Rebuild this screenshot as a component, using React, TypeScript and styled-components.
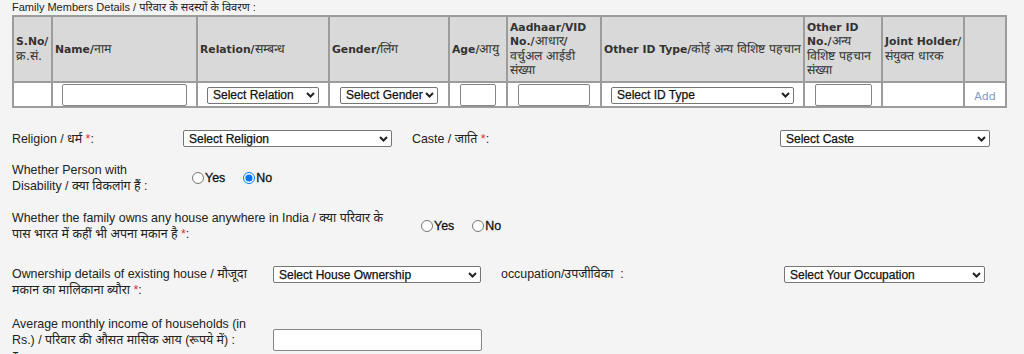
import React from 'react';
import styled, { createGlobalStyle } from 'styled-components';

const GlobalStyle = createGlobalStyle`
  html, body {
    margin: 0;
    padding: 0;
    background: #f4f4f4;
  }
  body {
    font-family: 'Liberation Sans', Arial, 'Noto Sans Devanagari', 'Lohit Devanagari', sans-serif;
    color: #333;
  }
`;

const Page = styled.div`
  width: 1024px;
  height: 354px;
  padding: 0 12px;
  box-sizing: border-box;
  overflow: hidden;
`;

const SectionTitle = styled.div`
  height: 15px;
  font-size: 11px;
  line-height: 14px;
  color: #222;
`;

const Table = styled.table`
  width: 993px;
  table-layout: fixed;
  border-collapse: separate;
  border-spacing: 0;
  border: 1px solid #9c9c9c;
`;

const Th = styled.th`
  height: 64px;
  padding: 0 2px;
  background: #d9d9d9;
  border: 1px solid #9c9c9c;
  text-align: left;
  vertical-align: middle;
  font-family: 'DejaVu Sans', Verdana, sans-serif;
  font-size: 10.8px;
  font-weight: bold;
  line-height: 13.5px;
  color: #333;
  white-space: nowrap;
  overflow: hidden;
`;

const Hi = styled.span`
  font-size: 12.4px;
  font-weight: normal;
`;

const Td = styled.td`
  height: 23px;
  padding: 0;
  background: #fff;
  border: 1px solid #9c9c9c;
  text-align: center;
  vertical-align: middle;
`;

const TextInput = styled.input<{ $w: number }>`
  width: ${(p) => p.$w}px;
  height: 22px;
  box-sizing: border-box;
  margin: 0;
  padding: 1px 3px;
  background: #fff;
  border: 1px solid #858585;
  border-radius: 2px;
  vertical-align: middle;
`;

const SelectBox = styled.div<{ $w: number }>`
  display: inline-flex;
  align-items: center;
  justify-content: space-between;
  gap: 2px;
  width: ${(p) => p.$w}px;
  height: 17px;
  box-sizing: border-box;
  padding: 0 3px 0 5px;
  background: #fff;
  border: 1px solid #767676;
  border-radius: 2px;
  font-family: 'Liberation Sans', Arial, sans-serif;
  font-size: 12px;
  color: #111;
  -webkit-text-stroke: 0.25px #111;
  text-align: left;
  white-space: nowrap;
  vertical-align: middle;
  cursor: default;
`;

const AddLink = styled.a`
  font-family: 'DejaVu Sans', Verdana, sans-serif;
  font-size: 11px;
  color: #7d9bc1;
  text-decoration: none;
`;

const FormRow = styled.div<{ $cols: string; $top: number; $align?: string }>`
  display: grid;
  grid-template-columns: ${(p) => p.$cols};
  align-items: ${(p) => p.$align ?? 'center'};
  margin-top: ${(p) => p.$top}px;
`;

const Label = styled.div`
  font-size: 12.4px;
  line-height: 16px;
  color: #222;
`;

const Req = styled.span`
  color: #e2332f;
`;

const RadioGroup = styled.div`
  display: flex;
  align-items: center;
`;

const RadioLabel = styled.label`
  display: inline-flex;
  align-items: center;
  margin-right: 18px;
  font-size: 12.4px;
  color: #111;
  -webkit-text-stroke: 0.3px #111;
`;

const Radio = styled.input.attrs({ type: 'radio' })`
  width: 12px;
  height: 12px;
  margin: 0 1px 0 0;
  accent-color: #0075ff;
`;

const Chevron = () => (
  <svg width="9" height="6" viewBox="0 0 9 6" style={{ flexShrink: 0 }}>
    <polyline points="1,1 4.5,4.5 8,1" fill="none" stroke="#222" strokeWidth="2" />
  </svg>
);

const Select: React.FC<{ w: number; text: string }> = ({ w, text }) => (
  <SelectBox $w={w}>
    <span>{text}</span>
    <Chevron />
  </SelectBox>
);

const colWidths = [39, 145, 132, 120, 58, 94, 203, 78, 82, 42];

const App: React.FC = () => {
  return (
    <Page>
      <GlobalStyle />
      <SectionTitle>Family Members Details / परिवार के सदस्यों के विवरण :</SectionTitle>
      <Table>
        <colgroup>
          {colWidths.map((w, i) => (
            <col key={i} style={{ width: w }} />
          ))}
        </colgroup>
        <thead>
          <tr>
            <Th>
              S.No/
              <br />
              <Hi>क्र.सं.</Hi>
            </Th>
            <Th>
              Name/<Hi>नाम</Hi>
            </Th>
            <Th>
              Relation/<Hi>सम्बन्ध</Hi>
            </Th>
            <Th>
              Gender/<Hi>लिंग</Hi>
            </Th>
            <Th>
              Age/<Hi>आयु</Hi>
            </Th>
            <Th>
              Aadhaar/VID
              <br />
              No./<Hi>आधार</Hi>/
              <br />
              <Hi>वर्चुअल आईडी</Hi>
              <br />
              <Hi>संख्या</Hi>
            </Th>
            <Th>
              Other ID Type/<Hi>कोई अन्य विशिष्ट पहचान</Hi>
            </Th>
            <Th>
              Other ID
              <br />
              No./<Hi>अन्य</Hi>
              <br />
              <Hi>विशिष्ट पहचान</Hi>
              <br />
              <Hi>संख्या</Hi>
            </Th>
            <Th>
              Joint Holder/
              <br />
              <Hi>संयुक्त धारक</Hi>
            </Th>
            <Th />
          </tr>
        </thead>
        <tbody>
          <tr>
            <Td />
            <Td>
              <TextInput $w={125} />
            </Td>
            <Td>
              <Select w={112} text="Select Relation" />
            </Td>
            <Td>
              <Select w={98} text="Select Gender" />
            </Td>
            <Td>
              <TextInput $w={36} />
            </Td>
            <Td>
              <TextInput $w={72} />
            </Td>
            <Td>
              <Select w={183} text="Select ID Type" />
            </Td>
            <Td>
              <TextInput $w={57} />
            </Td>
            <Td />
            <Td>
              <AddLink href="#">Add</AddLink>
            </Td>
          </tr>
        </tbody>
      </Table>

      <FormRow $cols="171px 229px 368px 210px" $top={22}>
        <Label>
          Religion / धर्म <Req>*</Req>:
        </Label>
        <Select w={209} text="Select Religion" />
        <Label>
          Caste / जाति <Req>*</Req>:
        </Label>
        <Select w={210} text="Select Caste" />
      </FormRow>

      <FormRow $cols="180px auto" $top={15}>
        <Label>
          Whether Person with
          <br />
          Disability / क्या विकलांग हैं :
        </Label>
        <RadioGroup>
          <RadioLabel>
            <Radio name="disability" />
            Yes
          </RadioLabel>
          <RadioLabel>
            <Radio name="disability" defaultChecked />
            No
          </RadioLabel>
        </RadioGroup>
      </FormRow>

      <FormRow $cols="409px auto" $top={16}>
        <Label>
          Whether the family owns any house anywhere in India / क्या परिवार के
          <br />
          पास भारत में कहीं भी अपना मकान है <Req>*</Req>:
        </Label>
        <RadioGroup>
          <RadioLabel>
            <Radio name="house" />
            Yes
          </RadioLabel>
          <RadioLabel>
            <Radio name="house" />
            No
          </RadioLabel>
        </RadioGroup>
      </FormRow>

      <FormRow $cols="261px 228px 283px 201px" $top={24} $align="start">
        <Label>
          Ownership details of existing house / मौजूदा
          <br />
          मकान का मालिकाना ब्यौरा <Req>*</Req>:
        </Label>
        <Select w={208} text="Select House Ownership" />
        <Label>occupation/उपजीविका &nbsp;:</Label>
        <Select w={201} text="Select Your Occupation" />
      </FormRow>

      <FormRow $cols="261px 209px" $top={18}>
        <Label>
          Average monthly income of households (in
          <br />
          Rs.) / परिवार की औसत मासिक आय (रूपये में) :
          <br />₹
        </Label>
        <TextInput $w={209} />
      </FormRow>
    </Page>
  );
};

export default App;
